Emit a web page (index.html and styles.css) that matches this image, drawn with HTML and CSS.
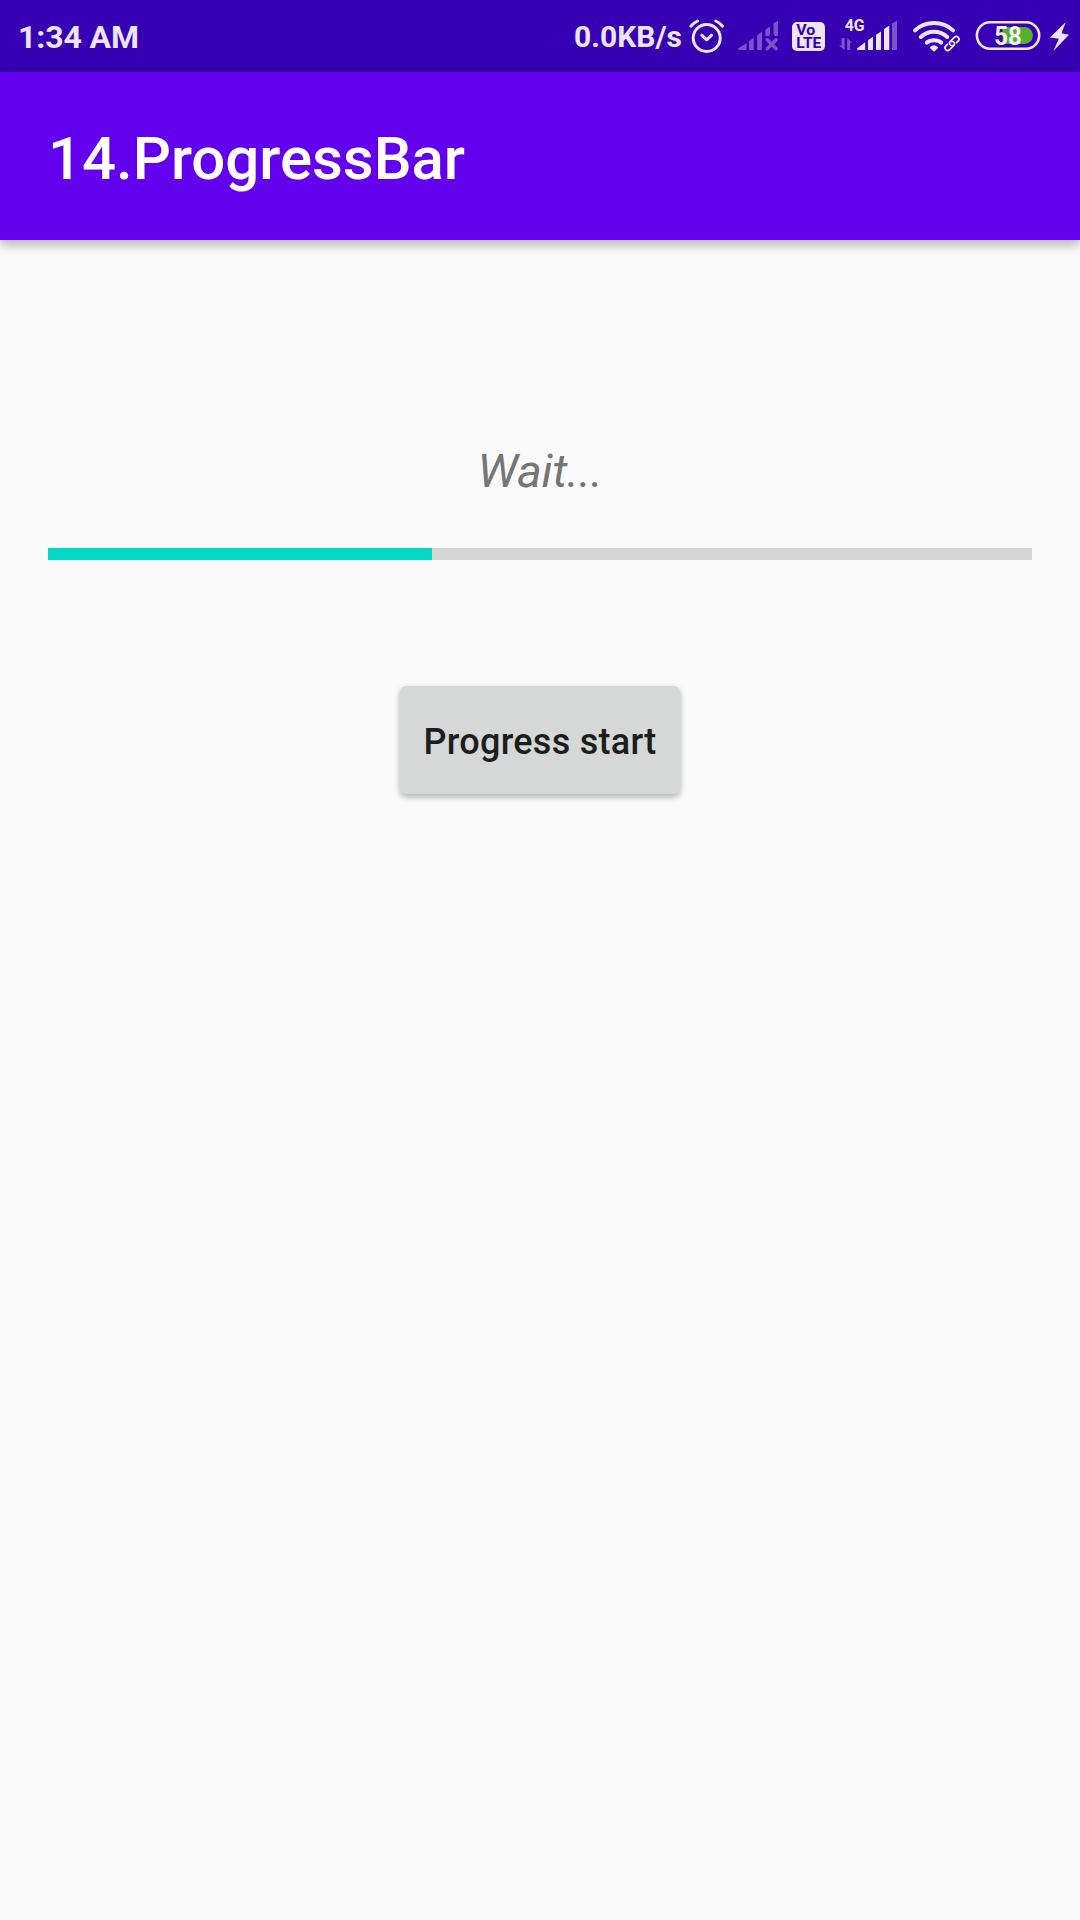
FILE: index.html
```html
<!DOCTYPE html>
<html lang="en">
<head>
<meta charset="utf-8">
<title>14.ProgressBar</title>
<link rel="stylesheet" href="styles.css">
</head>
<body>
<div class="status-bar">
  <span class="clock">1:34 AM</span>
  <span class="speed">0.0KB/s</span>
  <svg class="icon" width="46" height="72" viewBox="686 0 46 72">
    <g class="line" stroke-width="3">
      <circle cx="706.7" cy="38" r="13.5"/>
      <path d="M690.8 26.2Q693.5 22.8 697.6 21M715.8 21Q719.9 22.8 722.6 26.2M701.8 35.2L706.7 39.8L711.6 35.2"/>
    </g>
  </svg>
  <svg class="icon dim" width="56" height="72" viewBox="732 0 56 72">
    <path d="M738 48.6L746.6 43V50H739Q738 50 738 48.6ZM749 41.2L753.7 37.8V50H749ZM757.2 35.2L762 31.7V50H757.2ZM765.4 29.6L770 26.4V34.5L768.5 36H765.4ZM773.5 23.6L778 20.8V36H775L773.5 34.5Z"/>
    <path class="cross" d="M767.2 39.7L776.2 48.7M776.2 39.7L767.2 48.7"/>
  </svg>
  <svg class="icon" width="48" height="72" viewBox="788 0 48 72">
    <rect class="solid" x="792" y="22" width="33" height="29" rx="5"/>
    <text class="volte" x="796.3" y="35" textLength="19" lengthAdjust="spacingAndGlyphs">Vo</text>
    <text class="volte" x="796.3" y="48" textLength="25" lengthAdjust="spacingAndGlyphs">LTE</text>
  </svg>
  <svg class="icon" width="70" height="72" viewBox="836 0 70 72">
    <text class="network" x="844.7" y="31.2" textLength="20" lengthAdjust="spacingAndGlyphs">4G</text>
    <path class="dim" d="M841.5 38H844.6V50L839 45.5H841.5ZM847.2 38L852 42.6H850.2V50H847.2ZM892 23.5L897 20.8V50H892Z"/>
    <path class="solid" d="M857 48.5L865.2 42.2V50H858Q857 50 857 48.5ZM868 40.2L873 36.8V50H868ZM876 34.8L881 31.4V50H876ZM884 29L889.3 25.5V50H884Z"/>
  </svg>
  <svg class="icon" width="62" height="72" viewBox="906 0 62 72">
    <g class="wifi">
      <path d="M915 30.4Q922.8 23.1 934 23.1T953 30.4"/>
      <path d="M920.8 37Q926.2 31.7 934 31.7T947.2 37"/>
      <path d="M926.8 42.6Q929.6 40.2 934 40.2T941.2 42.6"/>
    </g>
    <path class="solid" d="M930.2 47Q934 43.4 937.8 47Q938.4 47.6 937.8 48.2L935.2 50.8Q934 51.8 932.8 50.8L930.2 48.2Q929.6 47.6 930.2 47Z"/>
    <g class="line" stroke-width="1.8" transform="rotate(-45 952 43.5)">
      <path d="M950.8 45.2A2.4 2.4 0 0 1 952 40.8H958A2.7 2.7 0 0 1 958 46.2H955.8"/>
      <path d="M953.2 41.8A2.4 2.4 0 0 1 952 46.2H946A2.7 2.7 0 0 1 946 40.8H948.2"/>
    </g>
  </svg>
  <svg class="icon" width="112" height="72" viewBox="968 0 112 72">
    <rect class="line" stroke-width="2.6" x="976.9" y="22.3" width="62.3" height="26.4" rx="13.2"/>
    <path class="charge" d="M1002.5 27H1024.5A8.5 8.5 0 0 1 1024.5 44H1002.5Z"/>
    <text class="level" x="994.3" y="44.8" textLength="27.5" lengthAdjust="spacingAndGlyphs">58</text>
    <path class="solid" d="M1065.8 22L1050 37.5L1058.8 38.8L1053.4 51L1069 34.7L1061.5 33.3Z"/>
  </svg>
</div>
<header class="app-bar"><h1 class="title">14.ProgressBar</h1></header>
<main class="content">
  <p class="message">Wait...</p>
  <div class="progress"><div class="progress-fill" style="width:39.03%"></div></div>
  <button class="start">Progress start</button>
</main>
</body>
</html>
```
FILE: styles.css
```css
* { box-sizing: border-box; }

body {
  margin: 0;
  width: 1080px;
  height: 1920px;
  overflow: hidden;
  display: flex;
  flex-direction: column;
  background: #fafafa;
  font-family: Roboto, sans-serif;
}

.status-bar {
  flex: none;
  height: 72px;
  display: flex;
  background: #3700b3;
  color: #ebe5f7;
  font-weight: 700;
  white-space: nowrap;
}

.clock {
  padding-left: 18px;
  font-size: 32px;
  letter-spacing: -0.1px;
  line-height: 74px;
}

.speed {
  margin-left: auto;
  padding-right: 4px;
  font-size: 30px;
  line-height: 73px;
}

.icon { flex: none; display: block; }
.line { fill: none; stroke: #ebe5f7; stroke-linecap: round; stroke-linejoin: round; }
.solid { fill: #ebe5f7; }
.dim { fill: #7b54cd; }
.cross { stroke: #7b54cd; stroke-width: 3.4; stroke-linecap: round; }
.wifi { fill: none; stroke: #ebe5f7; stroke-width: 4; stroke-linecap: round; }
.volte { fill: #3700b3; font-size: 14px; font-weight: 700; }
.network { fill: #ebe5f7; font-size: 16px; }
.charge { fill: #52b02a; }
.level { fill: #f4f0fa; font-size: 26px; }

.app-bar {
  flex: none;
  height: 168px;
  padding: 0 48px;
  display: flex;
  align-items: center;
  background: #6200ee;
  box-shadow: 0 4px 12px rgba(0, 0, 0, 0.32);
}

.title {
  margin: 0;
  padding-top: 5px;
  color: #fff;
  font-size: 60px;
  font-weight: 500;
  letter-spacing: -0.05px;
}

.content {
  flex: 1;
  padding: 203px 48px 0;
  display: flex;
  flex-direction: column;
  align-items: center;
}

.message {
  margin: 0;
  height: 105px;
  color: #757575;
  font-size: 47px;
  font-style: italic;
  letter-spacing: -0.2px;
  line-height: 56px;
}

.progress {
  width: 100%;
  height: 12px;
  background: #d6d6d6;
}

.progress-fill { height: 100%; background: #03dac5; }

.start {
  width: 280px;
  height: 108px;
  margin-top: 126px;
  padding: 3px 0 0;
  border: 0;
  border-radius: 6px;
  background: #d6d7d7;
  box-shadow: 0 3px 6px rgba(0, 0, 0, 0.3);
  color: #1c1d1d;
  font: 500 36px Roboto, sans-serif;
  letter-spacing: 0.27px;
  white-space: nowrap;
}
```
